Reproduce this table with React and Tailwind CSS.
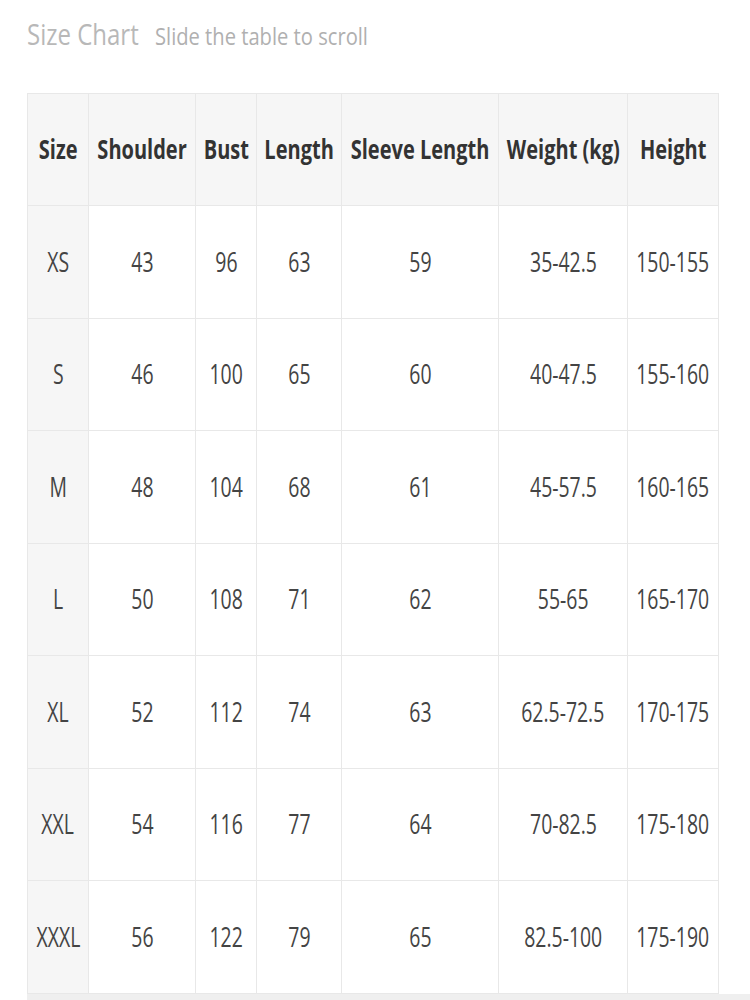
import React from "react";

const cols = [61, 107, 61, 85, 157, 129, 91];
const headers = ["Size", "Shoulder", "Bust", "Length", "Sleeve Length", "Weight (kg)", "Height"];
const rows = [
  ["XS", "43", "96", "63", "59", "35-42.5", "150-155"],
  ["S", "46", "100", "65", "60", "40-47.5", "155-160"],
  ["M", "48", "104", "68", "61", "45-57.5", "160-165"],
  ["L", "50", "108", "71", "62", "55-65", "165-170"],
  ["XL", "52", "112", "74", "63", "62.5-72.5", "170-175"],
  ["XXL", "54", "116", "77", "64", "70-82.5", "175-180"],
  ["XXXL", "56", "122", "79", "65", "82.5-100", "175-190"],
];

export default function App() {
  return (
    <div className="w-[750px] h-[1000px] bg-white overflow-hidden" style={{ fontFamily: '"Open Sans", "Liberation Sans", sans-serif' }}>
      <div className="pt-[11px] pl-[27px] flex items-baseline whitespace-nowrap h-[93px]">
        <span className="inline-block origin-left scale-x-[0.8] text-[30px] text-[#b8b8b8] w-[128px]">Size Chart</span>
        <span className="inline-block origin-left scale-x-[0.84] text-[24px] text-[#b0b0b0]">Slide the table to scroll</span>
      </div>
      <div className="ml-[27px] w-[723px]">
        <table className="table-fixed border-collapse w-[691px]">
          <colgroup>
            {cols.map((w, i) => (
              <col key={i} style={{ width: w }} />
            ))}
          </colgroup>
          <thead>
            <tr className="h-[112px] bg-[#f6f6f6]">
              {headers.map((h, i) => (
                <th key={i} className="border border-[#e8e8e8] p-0 align-middle">
                  <div className="flex justify-center whitespace-nowrap">
                    <span className="shrink-0 inline-block scale-x-[0.77] text-[26px] font-bold text-[#333]">{h}</span>
                  </div>
                </th>
              ))}
            </tr>
          </thead>
          <tbody>
            {rows.map((r, ri) => (
              <tr key={ri} className={ri === 6 ? "h-[113px]" : "h-[112.5px]"}>
                {r.map((c, ci) => (
                  <td key={ci} className={`border border-[#e8e8e8] p-0 align-middle ${ci === 0 ? "bg-[#f6f6f6]" : "bg-white"}`}>
                    <div className="flex justify-center whitespace-nowrap">
                      <span className="shrink-0 inline-block scale-x-[0.72] text-[27px] text-[#444]">{c}</span>
                    </div>
                  </td>
                ))}
              </tr>
            ))}
          </tbody>
        </table>
        <div className="h-[10px] bg-[#efefef]"></div>
      </div>
    </div>
  );
}
